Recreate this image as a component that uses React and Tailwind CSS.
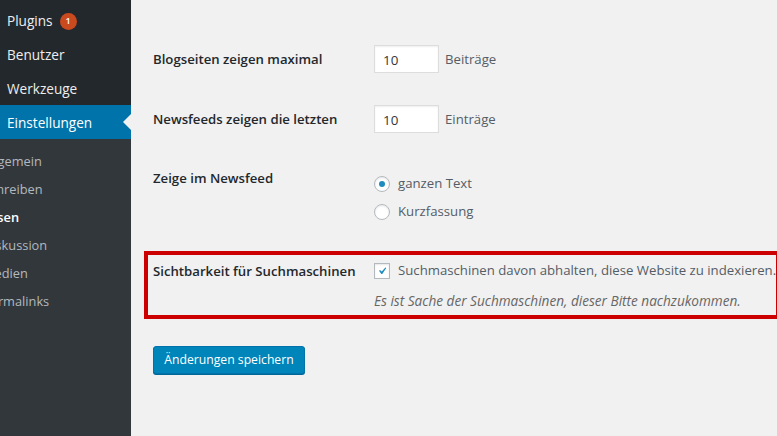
import React from 'react';

const font = { fontFamily: '"Open Sans", "Liberation Sans", sans-serif' };

function TopItem({ label, badge, active }) {
  return (
    <div
      className={`relative flex h-[34px] items-center pl-[7px] pt-[2px] text-[13.6px] ${
        active ? 'bg-[#0073aa] text-white' : 'text-[#eeeeee]'
      }`}
    >
      <span>{label}</span>
      {badge && (
        <span className="ml-[7px] flex h-[17px] w-[17px] items-center justify-center rounded-full bg-[#ca4a1f] text-[9px] font-semibold text-white">
          {badge}
        </span>
      )}
      {active && (
        <span className="absolute right-0 top-1/2 -translate-y-1/2 border-y-[8px] border-r-[8px] border-y-transparent border-r-[#f1f1f1]" />
      )}
    </div>
  );
}

function SubItem({ label, current }) {
  return (
    <div className="flex h-[28px] items-center overflow-hidden">
      <span
        className={`whitespace-nowrap text-[12.8px] ${
          current ? 'font-semibold text-white' : 'text-[#b4b9be]'
        }`}
      >
        {label}
      </span>
    </div>
  );
}

function NumberInput() {
  return (
    <div className="flex h-[28px] w-[65px] items-center border border-[#dddddd] bg-white pl-[8px] pt-[2px] text-[13.4px] text-[#32373c] shadow-[inset_0_1px_2px_rgba(0,0,0,0.07)]">
      10
    </div>
  );
}

function Radio({ checked }) {
  return (
    <span className="flex h-[16px] w-[16px] items-center justify-center rounded-full border border-[#b4b9be] bg-white shadow-[inset_0_1px_2px_rgba(0,0,0,0.1)]">
      {checked && <span className="h-[6px] w-[6px] rounded-full bg-[#1e8cbe]" />}
    </span>
  );
}

export default function App() {
  return (
    <div className="flex h-[436px] w-[777px] overflow-hidden bg-[#f1f1f1]" style={font}>
      {/* Sidebar */}
      <div className="flex w-[131px] shrink-0 flex-col bg-[#23282d]">
        <div className="pt-[3px]">
          <TopItem label="Plugins" badge="1" />
          <TopItem label="Benutzer" />
          <TopItem label="Werkzeuge" />
          <TopItem label="Einstellungen" active />
        </div>
        <div className="flex-1 bg-[#32373c] pt-[9px]">
          <div className="-ml-[17px]">
            <SubItem label="Allgemein" />
            <SubItem label="Schreiben" />
            <SubItem label="Lesen" current />
            <SubItem label="Diskussion" />
            <SubItem label="Medien" />
            <SubItem label="Permalinks" />
          </div>
        </div>
      </div>

      {/* Content */}
      <div className="flex flex-1 flex-col pl-[13px] text-[13.2px] text-[#23282d]">
        <div className="mt-[45px] flex items-center pl-[9px]">
          <div className="w-[221px] pt-[2px] font-semibold">Blogseiten zeigen maximal</div>
          <NumberInput />
          <span className="ml-[6px] pt-[2px] text-[#555d66]">Beiträge</span>
        </div>

        <div className="mt-[32px] flex items-center pl-[9px]">
          <div className="w-[221px] pt-[2px] font-semibold">Newsfeeds zeigen die letzten</div>
          <NumberInput />
          <span className="ml-[6px] pt-[2px] text-[#555d66]">Einträge</span>
        </div>

        <div className="mt-[35px] flex items-start pl-[9px]">
          <div className="w-[221px] leading-[20px] font-semibold">Zeige im Newsfeed</div>
          <div className="flex flex-col gap-[8px] pt-[6px] text-[#555d66]">
            <label className="flex h-[20px] items-center gap-[8px]">
              <Radio checked />
              ganzen Text
            </label>
            <label className="flex h-[20px] items-center gap-[8px]">
              <Radio />
              Kurzfassung
            </label>
          </div>
        </div>

        <div className="mt-[29px] flex items-start border-4 border-[#cc0000] pl-[5px] pt-[6px] pb-[4px]">
          <div className="w-[221px] shrink-0 leading-[20px] font-semibold">Sichtbarkeit für Suchmaschinen</div>
          <div className="flex flex-col">
            <label className="flex h-[20px] items-center gap-[8px] whitespace-nowrap text-[#555d66]">
              <span className="flex h-[16px] w-[16px] shrink-0 items-center justify-center border border-[#b4b9be] bg-white shadow-[inset_0_1px_2px_rgba(0,0,0,0.1)]">
                <svg width="20" height="20" viewBox="0 0 20 20">
                  <path d="M14.83 4.89l1.34.94-5.81 8.38H9.02L5.78 9.67l1.34-1.25 2.57 2.4z" fill="#1e8cbe" />
                </svg>
              </span>
              Suchmaschinen davon abhalten, diese Website zu indexieren.
            </label>
            <p className="mt-[10px] h-[20px] leading-[20px] italic text-[13.6px] text-[#666666]">
              Es ist Sache der Suchmaschinen, dieser Bitte nachzukommen.
            </p>
          </div>
        </div>

        <div className="mt-[27px] pl-[9px]">
          <button className="h-[28px] w-[152px] rounded-[3px] border border-[#0073aa] bg-[#0085ba] text-[12.2px] text-white shadow-[0_1px_0_#006799]">
            Änderungen speichern
          </button>
        </div>
      </div>
    </div>
  );
}
